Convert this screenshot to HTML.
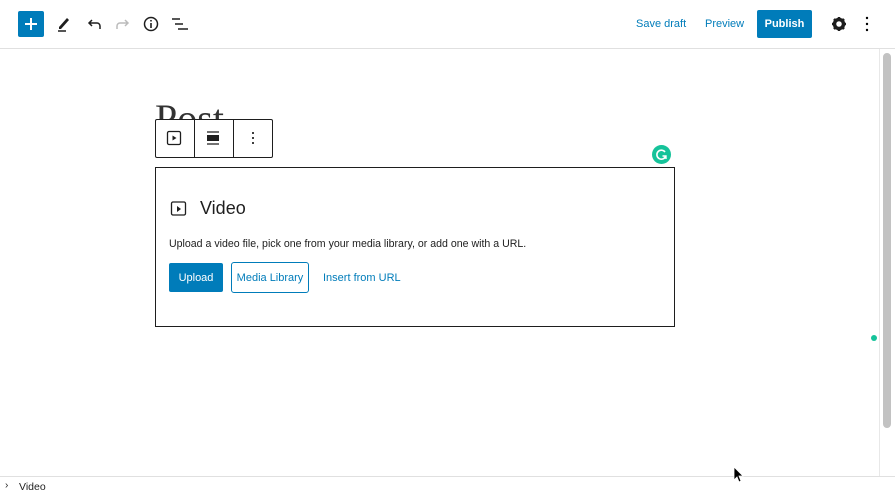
<!DOCTYPE html>
<html><head><style>
*{margin:0;padding:0;box-sizing:border-box}
body{width:895px;height:496px;overflow:hidden;background:#fff;font-family:"Liberation Sans",sans-serif;position:relative;color:#1e1e1e}
.abs{position:absolute}
.hdr{left:0;top:0;width:895px;height:49px;border-bottom:1px solid #e0e0e0}
.link{color:#007cba;font-size:11px}
</style></head><body>
<div class="abs hdr"></div>
<div class="abs" style="left:18px;top:11px;width:26px;height:26px;background:#007cba;border-radius:2px"></div>
<svg class="abs" style="left:18px;top:11px" width="26" height="26"><path d="M13 7v12M7 13h12" stroke="#fff" stroke-width="2"/></svg>
<svg class="abs" style="left:55px;top:14px" width="18" height="20"><path d="M4 13l8-9 2 2-8 9H4z" fill="#1e1e1e"/><path d="M3 17h8" stroke="#1e1e1e" stroke-width="1.5"/></svg>
<svg class="abs" style="left:85px;top:15px" width="18" height="18"><path d="M15 14v-3a3 3 0 0 0-3-3H4M7 5L4 8l3 3" stroke="#1e1e1e" stroke-width="1.5" fill="none"/></svg>
<svg class="abs" style="left:114px;top:15px" width="18" height="18"><path d="M3 14v-3a3 3 0 0 1 3-3h8M11 5l3 3-3 3" stroke="#bbb" stroke-width="1.5" fill="none"/></svg>
<svg class="abs" style="left:142px;top:15px" width="18" height="18"><circle cx="9" cy="9" r="6.5" stroke="#1e1e1e" stroke-width="1.5" fill="none"/><path d="M9 8v5M9 5v1.5" stroke="#1e1e1e" stroke-width="1.6"/></svg>
<svg class="abs" style="left:171px;top:15px" width="18" height="18"><path d="M1 4h8M4 9h8M7 14h10" stroke="#1e1e1e" stroke-width="1.5"/></svg>
<div class="abs link" style="left:636px;top:18px;line-height:13px">Save draft</div>
<div class="abs link" style="left:705px;top:18px;line-height:13px">Preview</div>
<div class="abs" style="left:757px;top:10px;width:55px;height:28px;background:#007cba;border-radius:2px;color:#fff;font-size:11px;font-weight:bold;text-align:center;line-height:29px">Publish</div>
<svg class="abs" style="left:830px;top:15px" width="18" height="18"><circle cx="9" cy="9" r="4.5" fill="none" stroke="#1e1e1e" stroke-width="3.5"/><path d="M9 2v3M9 13v3M2 9h3M13 9h3M4 4l2 2M12 12l2 2M4 14l2-2M12 6l2-2" stroke="#1e1e1e" stroke-width="2.5"/></svg>
<svg class="abs" style="left:860px;top:15px" width="14" height="18"><circle cx="7" cy="3" r="1.2"/><circle cx="7" cy="9" r="1.2"/><circle cx="7" cy="15" r="1.2"/></svg>
<div class="abs" style="left:155px;top:94px;font-family:'Liberation Serif',serif;font-size:40px;line-height:50px;height:25px;overflow:hidden;color:#333">Post</div>
<div class="abs" style="left:155px;top:119px;width:118px;height:39px;border:1px solid #1e1e1e;background:#fff;border-radius:2px"></div>
<div class="abs" style="left:194px;top:120px;width:1px;height:37px;background:#1e1e1e"></div>
<div class="abs" style="left:233px;top:120px;width:1px;height:37px;background:#1e1e1e"></div>
<svg class="abs" style="left:166px;top:130px" width="16" height="16"><rect x="1.5" y="1.5" width="13" height="13" rx="1.5" fill="none" stroke="#1e1e1e" stroke-width="1.3"/><path d="M6.5 5.5v5l4-2.5z" fill="#1e1e1e"/></svg>
<svg class="abs" style="left:205px;top:130px" width="16" height="16"><path d="M2 2h12M2 14h12" stroke="#1e1e1e" stroke-width="1.2"/><rect x="2" y="5" width="12" height="6" fill="#1e1e1e"/></svg>
<svg class="abs" style="left:247px;top:130px" width="12" height="16"><circle cx="6" cy="3" r="1"/><circle cx="6" cy="8" r="1"/><circle cx="6" cy="13" r="1"/></svg>
<div class="abs" style="left:652px;top:145px;width:19px;height:19px;border-radius:50%;background:#15c39a"></div>
<svg class="abs" style="left:652px;top:145px" width="19" height="19"><path d="M13 7a4.5 4.5 0 1 0 0.5 4.5" stroke="#fff" stroke-width="1.6" fill="none"/><path d="M10.5 11h3.5v3" stroke="#fff" stroke-width="1.4" fill="none"/></svg>
<div class="abs" style="left:155px;top:167px;width:520px;height:160px;border:1px solid #1e1e1e"></div>
<svg class="abs" style="left:170px;top:200px" width="18" height="18"><rect x="1.5" y="2" width="14" height="13" rx="1.5" fill="none" stroke="#1e1e1e" stroke-width="1.3"/><path d="M7 6v6l4-3z" fill="#1e1e1e"/></svg>
<div class="abs" style="left:200px;top:198px;font-size:18px">Video</div>
<div class="abs" style="left:169px;top:238px;font-size:10.6px">Upload a video file, pick one from your media library, or add one with a URL.</div>
<div class="abs" style="left:169px;top:263px;width:54px;height:29px;background:#007cba;border-radius:2px;color:#fff;font-size:11px;text-align:center;line-height:31px">Upload</div>
<div class="abs link" style="left:231px;top:262px;width:78px;height:31px;border:1.5px solid #007cba;border-radius:3px;text-align:center;line-height:31px">Media Library</div>
<div class="abs link" style="left:323px;top:272px;line-height:13px">Insert from URL</div>
<div class="abs" style="left:871px;top:335px;width:6px;height:6px;border-radius:50%;background:#15c39a"></div>
<div class="abs" style="left:879px;top:49px;width:1px;height:427px;background:#e8e8e8"></div>
<div class="abs" style="left:883px;top:53px;width:8px;height:375px;border-radius:4px;background:#c2c2c2"></div>
<div class="abs" style="left:0;top:476px;width:895px;height:1px;background:#e0e0e0"></div>
<div class="abs" style="left:5px;top:480px;font-size:10px">›</div>
<div class="abs" style="left:19px;top:481px;font-size:10.5px">Video</div>
<svg class="abs" style="left:733px;top:466px" width="12" height="18"><path d="M1 1v13l3-3 2 5 2-1-2-5h4z" fill="#000" stroke="#fff" stroke-width="0.8"/></svg>
</body></html>
